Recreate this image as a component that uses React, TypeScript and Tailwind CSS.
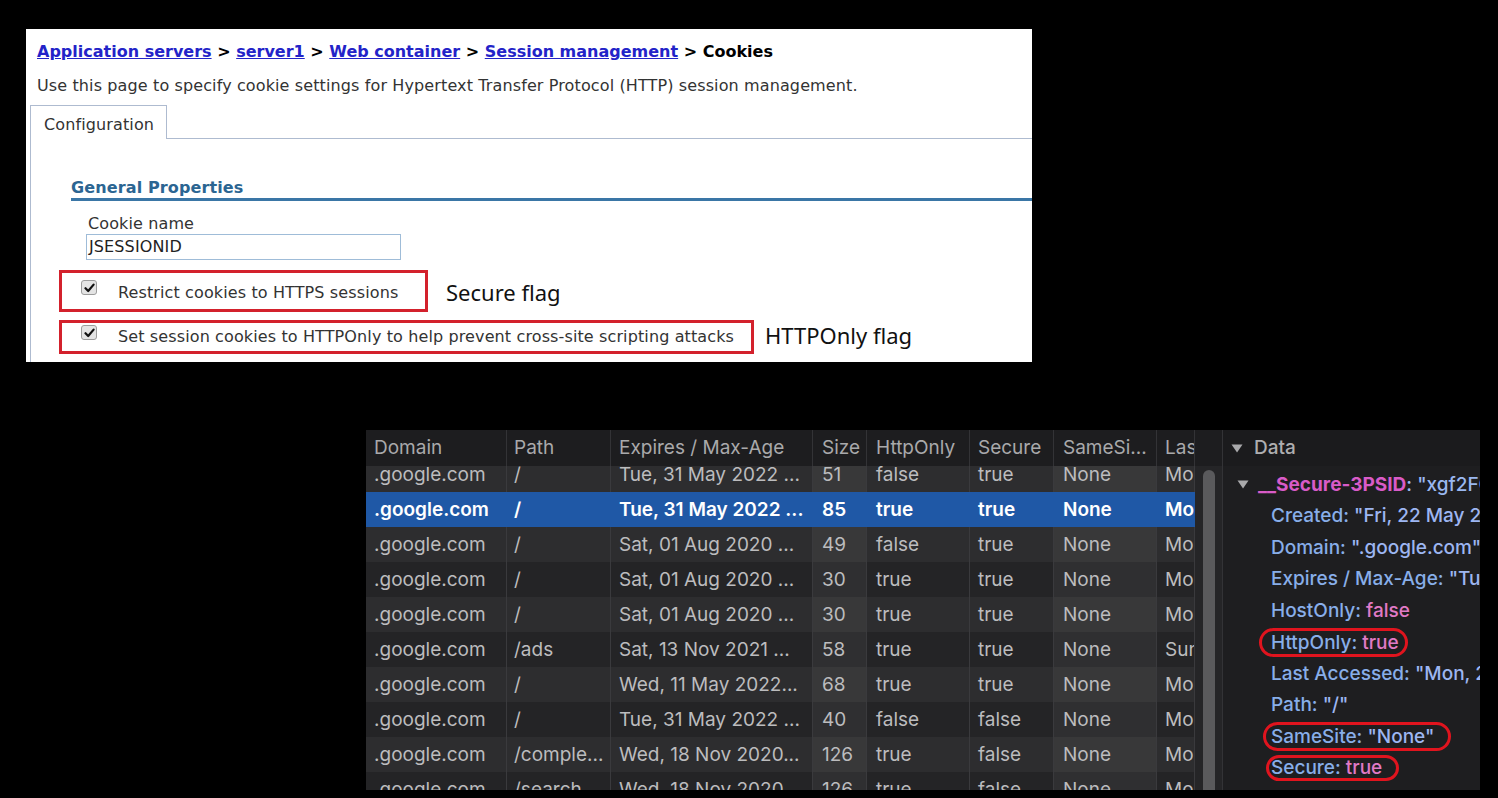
const rows = [
  { domain: '.google.com', path: '/', expires: 'Tue, 31 May 2022 ...', size: '51', httpOnly: 'false', secure: 'true', sameSite: 'None', last: 'Mon, 25 May' },
  { domain: '.google.com', path: '/', expires: 'Tue, 31 May 2022 ...', size: '85', httpOnly: 'true', secure: 'true', sameSite: 'None', last: 'Mon, 25 May', selected: true },
  { domain: '.google.com', path: '/', expires: 'Sat, 01 Aug 2020 ...', size: '49', httpOnly: 'false', secure: 'true', sameSite: 'None', last: 'Mon, 25 May' },
  { domain: '.google.com', path: '/', expires: 'Sat, 01 Aug 2020 ...', size: '30', httpOnly: 'true', secure: 'true', sameSite: 'None', last: 'Mon, 25 May' },
  { domain: '.google.com', path: '/', expires: 'Sat, 01 Aug 2020 ...', size: '30', httpOnly: 'true', secure: 'true', sameSite: 'None', last: 'Mon, 25 May' },
  { domain: '.google.com', path: '/ads', expires: 'Sat, 13 Nov 2021 ...', size: '58', httpOnly: 'true', secure: 'true', sameSite: 'None', last: 'Sun, 24 May' },
  { domain: '.google.com', path: '/', expires: 'Wed, 11 May 2022...', size: '68', httpOnly: 'true', secure: 'true', sameSite: 'None', last: 'Mon, 25 May' },
  { domain: '.google.com', path: '/', expires: 'Tue, 31 May 2022 ...', size: '40', httpOnly: 'false', secure: 'false', sameSite: 'None', last: 'Mon, 25 May' },
  { domain: '.google.com', path: '/comple...', expires: 'Wed, 18 Nov 2020...', size: '126', httpOnly: 'true', secure: 'false', sameSite: 'None', last: 'Mon, 25 May' },
  { domain: '.google.com', path: '/search...', expires: 'Wed, 18 Nov 2020...', size: '126', httpOnly: 'true', secure: 'false', sameSite: 'None', last: 'Mon, 25 May' },
];

const columns = [
  { key: 'domain', label: 'Domain', w: 'w-[141px]', pl: 'pl-[8px]', tint: false },
  { key: 'path', label: 'Path', w: 'w-[104px]', pl: 'pl-[7px]', tint: false },
  { key: 'expires', label: 'Expires / Max-Age', w: 'w-[202px]', pl: 'pl-[8px]', tint: false },
  { key: 'size', label: 'Size', w: 'w-[54px]', pl: 'pl-[9px]', tint: true },
  { key: 'httpOnly', label: 'HttpOnly', w: 'w-[103px]', pl: 'pl-[9px]', tint: false },
  { key: 'secure', label: 'Secure', w: 'w-[84px]', pl: 'pl-[8px]', tint: false },
  { key: 'sameSite', label: 'SameSi...', w: 'w-[103px]', pl: 'pl-[9px]', tint: true },
  { key: 'last', label: 'Last Accessed', w: 'w-[38px]', pl: 'pl-[8px]', tint: false },
] as const;

function Checkbox() {
  return (
    <div className="w-[16px] h-[15px] shrink-0 rounded-[3px] border border-[#9c9c9c] bg-[#e4e4e4] flex items-center justify-center">
      <svg width="11" height="10" viewBox="0 0 11 10">
        <path d="M1.5 5.2 L4.2 8 L9.6 1.6" fill="none" stroke="#111" strokeWidth="2.2" strokeLinecap="round" strokeLinejoin="round" />
      </svg>
    </div>
  );
}

function Caret({ color }: { color: string }) {
  return (
    <svg width="12" height="9" viewBox="0 0 12 9" className="shrink-0">
      <path d="M0.5 0.5 H11.5 L6 8.5 Z" fill={color} />
    </svg>
  );
}

export default function App() {
  return (
    <div className="w-[1498px] h-[798px] bg-black overflow-hidden flex flex-col">
      {/* WebSphere console screenshot */}
      <div className="ml-[26px] mt-[29px] w-[1006px] h-[333px] shrink-0 bg-white flex flex-col font-['DejaVu_Sans',sans-serif] text-[16px] tracking-[0.12px] text-[#333]">
        <div className="pl-[11px] pt-[13px] leading-[20px] font-bold whitespace-nowrap text-black tracking-normal">
          <a className="text-[#2323c8] underline">Application servers</a> {'>'}{' '}
          <a className="text-[#2323c8] underline">server1</a> {'>'}{' '}
          <a className="text-[#2323c8] underline">Web container</a> {'>'}{' '}
          <a className="text-[#2323c8] underline">Session management</a> {'>'} Cookies
        </div>
        <p className="mt-[14px] pl-[11px] leading-[20px] whitespace-nowrap">
          Use this page to specify cookie settings for Hypertext Transfer Protocol (HTTP) session management.
        </p>

        <div className="mt-[9px] ml-[4px] flex h-[34px]">
          <div className="w-[137px] border-t border-l border-r border-[#aebbd0] pl-[13px] pt-[9px] leading-[20px]">Configuration</div>
          <div className="flex-1 border-b border-[#aebbd0]" />
        </div>

        <div className="ml-[4px] flex-1 border-l border-[#aebbd0] flex flex-col">
          <div className="mt-[39px] ml-[40px] leading-[20px] font-bold text-[#2b6592] border-b-[3px] border-[#3a76a6]">General Properties</div>
          <div className="mt-[13px] ml-[57px] leading-[20px]">Cookie name</div>
          <div className="ml-[55px] w-[315px] h-[26px] border border-[#9fbcd8] pl-[2px] leading-[24px] text-[#222]">JSESSIONID</div>

          <div className="mt-[10px] ml-[28px] flex items-start">
            <div className="w-[369px] h-[42px] border-[3px] border-[#d3212c] flex items-start pl-[19px]">
              <div className="mt-[7px]"><Checkbox /></div>
              <span className="ml-[21px] mt-[10px] leading-[20px] whitespace-nowrap">Restrict cookies to HTTPS sessions</span>
            </div>
            <span className="ml-[18px] mt-[8px] leading-[28px] text-[22px] tracking-normal text-[#111] font-['Noto_Sans',sans-serif]">Secure flag</span>
          </div>

          <div className="mt-[8px] ml-[28px] flex items-start">
            <div className="w-[695px] h-[34px] border-[3px] border-[#d3212c] flex items-start pl-[19px]">
              <div className="mt-[2px]"><Checkbox /></div>
              <span className="ml-[21px] mt-[4px] leading-[20px] whitespace-nowrap">Set session cookies to HTTPOnly to help prevent cross-site scripting attacks</span>
            </div>
            <span className="ml-[11px] mt-[1px] leading-[28px] text-[22px] tracking-normal text-[#111] font-['Noto_Sans',sans-serif]">HTTPOnly flag</span>
          </div>
        </div>
      </div>

      {/* Browser devtools cookie table */}
      <div className="ml-[366px] mt-[68px] w-[1114px] h-[360px] shrink-0 flex font-['Inter',sans-serif] text-[19px]">
        <div className="w-[829px] flex flex-col bg-[#262628]">
          <div className="h-[36px] shrink-0 flex bg-[#1d1d1f] text-[#a9a9ab]">
            {columns.map(c => (
              <div key={c.key} className={`${c.w} ${c.pl} shrink-0 overflow-hidden whitespace-nowrap leading-[36px] border-r border-[#333336]`}>
                {c.label}
              </div>
            ))}
          </div>
          <div className="flex-1 overflow-hidden">
            <div className="-mt-[9px]">
              {rows.map((r, i) => (
                <div
                  key={i}
                  className={`h-[35px] flex ${r.selected ? 'bg-[#1f58a6] text-white font-semibold' : i % 2 === 0 ? 'bg-[#2d2d2f] text-[#bcbcbe]' : 'bg-[#242426] text-[#bcbcbe]'}`}
                >
                  {columns.map(c => (
                    <div
                      key={c.key}
                      className={`${c.w} ${c.pl} shrink-0 overflow-hidden whitespace-nowrap leading-[35px] border-r ${r.selected ? 'border-transparent' : 'border-[#3a3a3d]'} ${c.tint && !r.selected ? 'bg-white/[0.05]' : ''}`}
                    >
                      {r[c.key]}
                    </div>
                  ))}
                </div>
              ))}
            </div>
          </div>
        </div>

        <div className="w-[27px] flex flex-col bg-[#1d1d1f]">
          <div className="h-[36px] shrink-0" />
          <div className="flex-1 bg-[#252527] pl-[8px] pt-[4px]">
            <div className="w-[12px] h-full rounded-t-full bg-[#5a5a5c]" />
          </div>
        </div>

        <div className="w-[258px] flex flex-col bg-[#1e1e20] border-l border-[#333336] overflow-hidden font-medium">
          <div className="h-[36px] shrink-0 flex items-center bg-[#1b1b1d] text-[#aeaeb0] pl-[8px] gap-[11px]">
            <Caret color="#a9a9ab" />
            <span>Data</span>
          </div>
          <div className="pt-[3px] whitespace-nowrap text-[#88aee9]">
            <div className="h-[31.5px] flex items-center pl-[14px] gap-[9px]">
              <Caret color="#a9a9ab" />
              <span>
                <span className="font-bold text-[#d95bc8]">__Secure-3PSID</span>
                <span className="text-[#9ab8f0]">: "xgf2FQbC..."</span>
              </span>
            </div>
            {[
              { k: 'Created', v: '"Fri, 22 May 2020 ..."', bool: false },
              { k: 'Domain', v: '".google.com"', bool: false },
              { k: 'Expires / Max-Age', v: '"Tue, 31 May 2022 ..."', bool: false },
              { k: 'HostOnly', v: 'false', bool: true },
            ].map(l => (
              <div key={l.k} className="h-[31.5px] flex items-center pl-[48px]">
                <span>{l.k}:&nbsp;</span>
                <span className={l.bool ? 'text-[#e17ac6]' : 'text-[#9db6f2]'}>{l.v}</span>
              </div>
            ))}
            <div className="h-[31.5px] flex items-center pl-[48px]">
              <span className="-ml-[12px] pl-[9px] pr-[6px] leading-[23px] border-[3px] border-[#e0141e] rounded-full">
                HttpOnly:&nbsp;<span className="text-[#e17ac6]">true</span>
              </span>
            </div>
            <div className="h-[31.5px] flex items-center pl-[48px]">
              <span>Last Accessed:&nbsp;</span>
              <span className="text-[#9db6f2]">"Mon, 25 May 2020 ..."</span>
            </div>
            <div className="h-[31.5px] flex items-center pl-[48px]">
              <span>Path:&nbsp;</span>
              <span className="text-[#9db6f2]">"/"</span>
            </div>
            <div className="h-[31.5px] flex items-center pl-[48px]">
              <span className="-ml-[8px] pl-[5px] pr-[14px] leading-[23px] border-[3px] border-[#e0141e] rounded-full">
                SameSite:&nbsp;<span className="text-[#9db6f2]">"None"</span>
              </span>
            </div>
            <div className="h-[31.5px] flex items-center pl-[48px]">
              <span className="-ml-[5px] pl-[2px] pr-[14px] leading-[20px] border-[3px] border-[#e0141e] rounded-full">
                Secure:&nbsp;<span className="text-[#e17ac6]">true</span>
              </span>
            </div>
          </div>
        </div>
      </div>
    </div>
  );
}
